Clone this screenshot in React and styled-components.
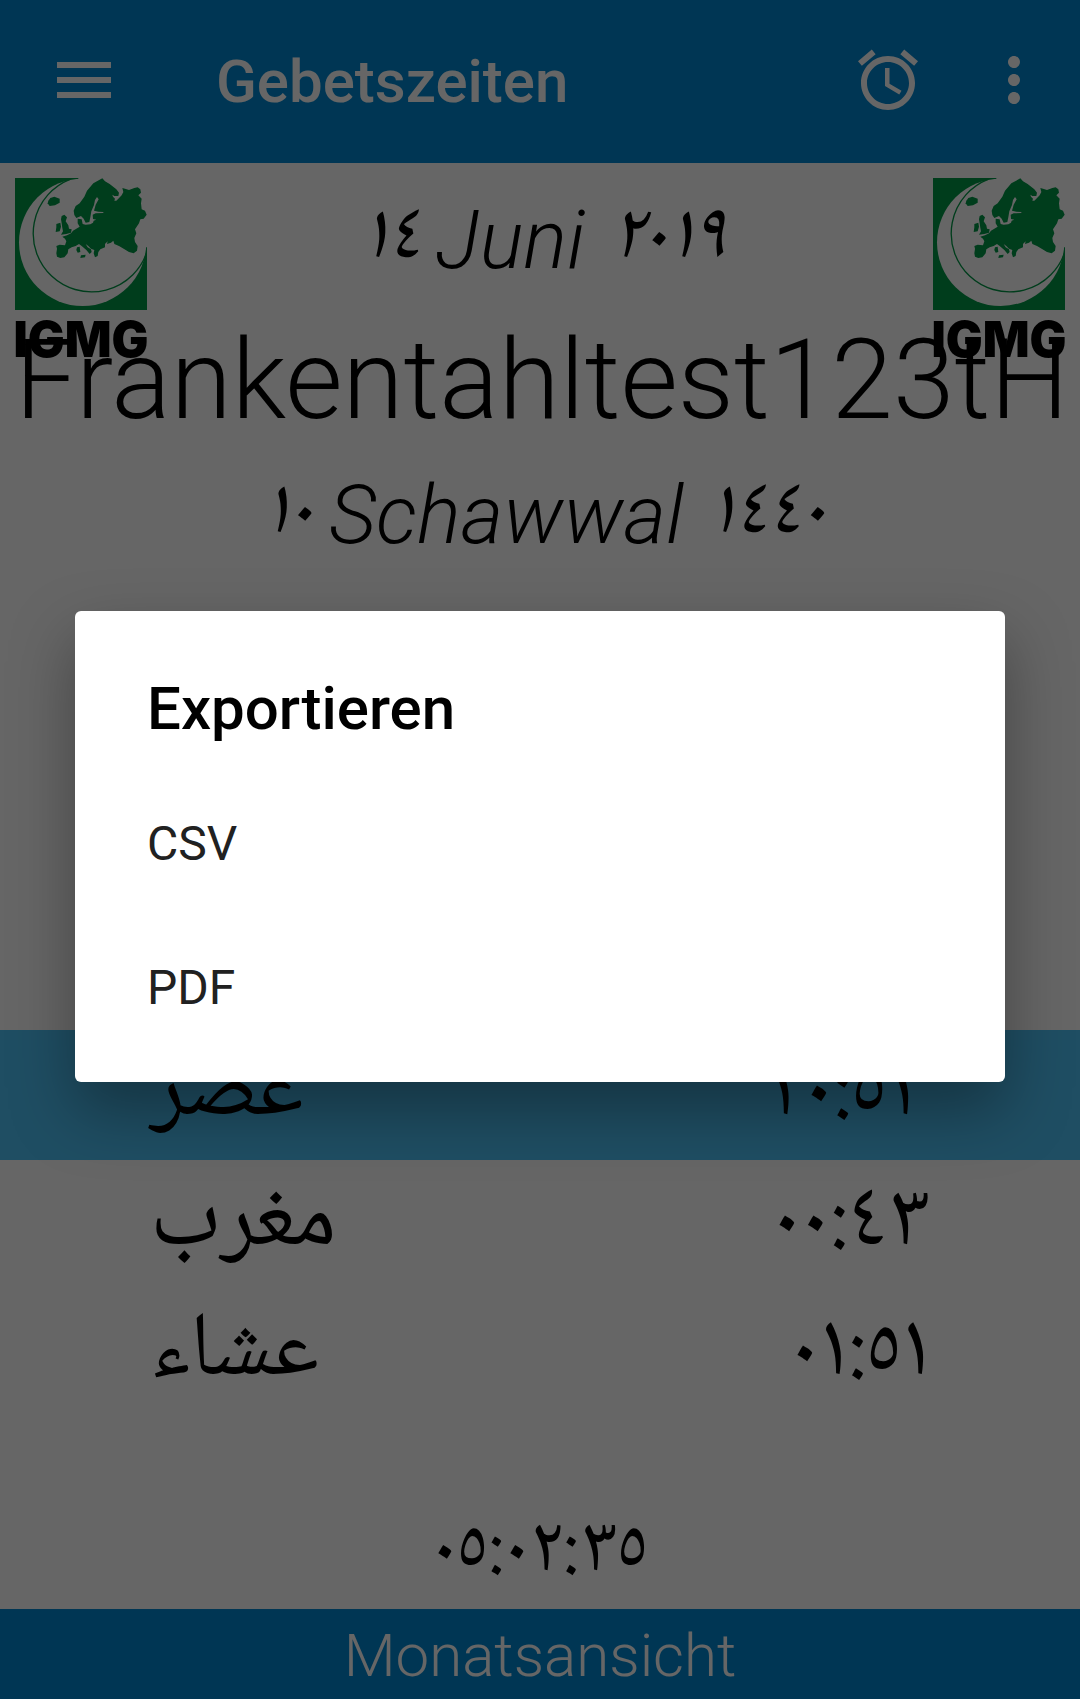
import React from "react";
import styled, { createGlobalStyle } from "styled-components";

const latin = 'Roboto, "Noto Sans", sans-serif';
const arabic = '"Noto Naskh Arabic", "DejaVu Sans", sans-serif';

const GlobalStyle = createGlobalStyle`
  *, *::before, *::after { box-sizing: border-box; }
  body { margin: 0; background: #fff; }
  button { font: inherit; color: inherit; background: none; border: 0; padding: 0; cursor: pointer; }
`;

const Screen = styled.div`
  position: relative;
  display: flex;
  flex-direction: column;
  min-height: 100vh;
  overflow: hidden;
  color: #000;
  font-family: ${latin};
`;

const AppBar = styled.header`
  display: flex;
  align-items: center;
  height: 163px;
  padding: 0 30px 4px 48px;
  background: #0288d1;
  color: #fff;
`;

const IconButton = styled.button`
  display: flex;
  width: 72px;
  height: 72px;
  margin-left: ${(p) => p.$gap || 0}px;
`;

const Icon = styled.svg`
  width: 72px;
  height: 72px;
  fill: currentColor;
`;

const ScreenTitle = styled.h1`
  flex: 1;
  margin: 0 0 0 96px;
  padding-top: 4px;
  font-size: 60px;
  font-weight: 500;
  line-height: 72px;
`;

const Main = styled.main`
  flex: 1;
  display: flex;
  flex-direction: column;
`;

const Hero = styled.section`
  display: grid;
  grid-template-columns: auto 1fr auto;
  grid-template-rows: 127px 148px 124px;
  padding: 15px 15px 0;
`;

const Logo = styled.div`
  grid-row: 1 / 3;
  grid-column: ${(p) => p.$column};
  display: flex;
  flex-direction: column;
  align-items: center;
  gap: 12px;
  width: 132px;
`;

const Emblem = styled.svg`
  width: 132px;
  height: 132px;
`;

const LogoWord = styled.span`
  font-family: Inter, sans-serif;
  font-size: 49px;
  font-weight: 900;
  line-height: 36px;
`;

const DateLine = styled.p`
  grid-row: ${(p) => p.$row};
  grid-column: ${(p) => p.$column};
  display: flex;
  justify-content: center;
  align-items: center;
  gap: 16px;
  height: 124px;
  margin: 0;
  padding-left: 8px;
  font-size: 82px;
  font-style: italic;
  line-height: 124px;
  font-weight: 300;
`;

const Numerals = styled.span`
  font-family: ${arabic};
  font-size: 80px;
  font-weight: 400;
  font-variant-numeric: proportional-nums;
`;

const Month = styled.span`
  margin-right: 8px;
`;

const Place = styled.h2`
  grid-row: 2;
  grid-column: 1 / -1;
  margin: 0;
  font-size: 111px;
  font-weight: 300;
  line-height: 150px;
  text-align: center;
  white-space: nowrap;
`;

const PrayerTable = styled.table`
  width: 100%;
  margin-top: auto;
  border-collapse: collapse;
  font-family: ${arabic};
  font-size: 91px;
  line-height: 130px;
  font-variant-numeric: proportional-nums;
`;

const PrayerRow = styled.tr`
  height: 130px;
  background: ${(p) => (p.$active ? "#4fc3f7" : "transparent")};
`;

const PrayerName = styled.th`
  padding: 0 0 0 150px;
  font-weight: 400;
  text-align: left;
`;

const PrayerTime = styled.td`
  padding: 0 150px 0 0;
  text-align: right;
`;

const Countdown = styled.div`
  display: flex;
  align-items: center;
  justify-content: center;
  height: 189px;
  padding-top: 76px;
  font-family: ${arabic};
  font-size: 80px;
  line-height: 100px;
  font-variant-numeric: proportional-nums;
`;

const MonthButton = styled.button`
  height: 90px;
  && {
    padding-top: 4px;
    background: #0288d1;
    color: #fff;
    font-size: 60px;
    font-weight: 300;
    line-height: 72px;
  }
`;

const Scrim = styled.div`
  position: absolute;
  inset: 0;
  display: flex;
  align-items: center;
  padding: 0 75px 6px;
  background: rgba(0, 0, 0, 0.6);
`;

const Dialog = styled.div`
  flex: 1;
  padding: 56px 0 23px;
  border-radius: 6px;
  background: #fff;
  box-shadow: 0 28px 64px rgba(0, 0, 0, 0.34);
`;

const DialogTitle = styled.h2`
  margin: 0 72px 20px;
  font-size: 60px;
  font-weight: 500;
  line-height: 84px;
`;

const Option = styled.button`
  display: block;
  width: 100%;
  height: 144px;
  && {
    padding: 0 72px;
    color: #212121;
    font-size: 48px;
    text-align: left;
  }
`;

const prayers = [
  { name: "عصر", time: "٢٠:٥٣", active: true },
  { name: "مغرب", time: "٠٠:٤٣" },
  { name: "عشاء", time: "٠١:٥١" },
];

function IgmgLogo({ column }) {
  return (
    <Logo $column={column}>
      <Emblem viewBox="0 0 396 396" aria-hidden="true">
        <path fill="#009846" d="M0 0H396V396H0Z" />
        <circle cx="203" cy="193" r="191" fill="#fff" />
        <path fill="#fff" d="M190 -1H397V208H190Z" />
        <path fill="none" stroke="#009846" strokeWidth="4" d="M165 4A175 175 0 1 0 396 221" />
        <g fill="#009846" transform="translate(90 -24)">
          <path d="M88 135L86 122L92 108L104 100L118 80L126 62L145 40L172 25L180 34L194 42L214 58L222 68L220 78L208 78L202 74L204 80L210 86L208 92L214 92L220 86L230 76L235 66L232 54L240 56L252 60L268 54L278 52L286 58L288 68L280 76L290 86L288 100L290 118L300 122L305 134L296 146L286 148L282 160L270 178L274 190L268 204L270 216L278 228L276 242L266 250L252 246L236 236L222 228L208 222L205 212L198 218L186 222L188 214L180 222L180 232L166 238L160 246L158 258L150 262L146 250L148 240L138 236L130 228L122 222L128 232L138 238L140 246L134 252L124 240L110 228L102 222L92 228L80 232L70 238L68 250L58 262L46 264L36 260L34 250L36 236L34 228L44 224L60 226L64 214L60 206L52 200L66 196L78 190L84 182L94 176L104 170L98 160L98 146L110 148L113 162L122 164L136 163L144 158L146 152L154 149L144 147L143 134L152 130L175 129L175 126L160 125L147 122L152 104L161 88L156 81L150 90L147 105L139 124L136 142L133 156L122 158L116 146L108 138L94 144Z" />
          <path d="M10 92L16 84L28 80L44 86L44 98L30 106L14 108L8 100Z" />
          <path d="M50 138L58 134L66 142L62 154L70 166L72 176L80 178L78 188L64 192L48 194L54 184L52 174L50 160L48 148Z" />
          <path d="M34 162L46 158L48 170L44 184L32 186L34 172Z" />
          <path d="M96 232L104 230L106 246L98 248L94 240Z" />
          <path d="M108 256L122 254L120 262L106 264Z" />
        </g>
      </Emblem>
      <LogoWord>IGMG</LogoWord>
    </Logo>
  );
}

export default function App() {
  return (
    <>
      <GlobalStyle />
      <Screen>
        <AppBar>
          <IconButton aria-label="Menü">
            <Icon viewBox="0 0 24 24">
              <path d="M3 18h18v-2H3v2zm0-5h18v-2H3v2zm0-7v2h18V6H3z" />
            </Icon>
          </IconButton>
          <ScreenTitle>Gebetszeiten</ScreenTitle>
          <IconButton aria-label="Wecker">
            <Icon viewBox="0 0 24 24">
              <path d="M22 5.72l-4.6-3.86-1.29 1.53 4.6 3.86L22 5.72zM7.88 3.39L6.6 1.86 2 5.71l1.29 1.53 4.59-3.85zM12.5 8H11v6l4.75 2.85.75-1.23-4-2.37V8zM12 4c-4.97 0-9 4.03-9 9s4.02 9 9 9c4.97 0 9-4.03 9-9s-4.03-9-9-9zm0 16c-3.87 0-7-3.13-7-7s3.13-7 7-7 7 3.13 7 7-3.13 7-7 7z" />
            </Icon>
          </IconButton>
          <IconButton aria-label="Weitere Optionen" $gap={54}>
            <Icon viewBox="0 0 24 24">
              <path d="M12 8c1.1 0 2-.9 2-2s-.9-2-2-2-2 .9-2 2 .9 2 2 2zm0 2c-1.1 0-2 .9-2 2s.9 2 2 2 2-.9 2-2-.9-2-2-2zm0 6c-1.1 0-2 .9-2 2s.9 2 2 2 2-.9 2-2-.9-2-2-2z" />
            </Icon>
          </IconButton>
        </AppBar>
        <Main>
          <Hero>
            <IgmgLogo column={1} />
            <DateLine $row={1} $column={2}>
              <Numerals>١٤</Numerals>
              <Month>Juni</Month>
              <Numerals>٢٠١٩</Numerals>
            </DateLine>
            <IgmgLogo column={3} />
            <Place>Frankentahltest123tH</Place>
            <DateLine $row={3} $column="1 / -1">
              <Numerals>١٠</Numerals>
              <Month>Schawwal</Month>
              <Numerals>١٤٤٠</Numerals>
            </DateLine>
          </Hero>
          <PrayerTable>
            <tbody>
              {prayers.map((p) => (
                <PrayerRow key={p.name} $active={p.active}>
                  <PrayerName scope="row">{p.name}</PrayerName>
                  <PrayerTime>{p.time}</PrayerTime>
                </PrayerRow>
              ))}
            </tbody>
          </PrayerTable>
          <Countdown>٠٥:٠٢:٣٥</Countdown>
        </Main>
        <MonthButton>Monatsansicht</MonthButton>
        <Scrim>
          <Dialog role="dialog" aria-modal="true" aria-labelledby="export-title">
            <DialogTitle id="export-title">Exportieren</DialogTitle>
            <Option>CSV</Option>
            <Option>PDF</Option>
          </Dialog>
        </Scrim>
      </Screen>
    </>
  );
}
